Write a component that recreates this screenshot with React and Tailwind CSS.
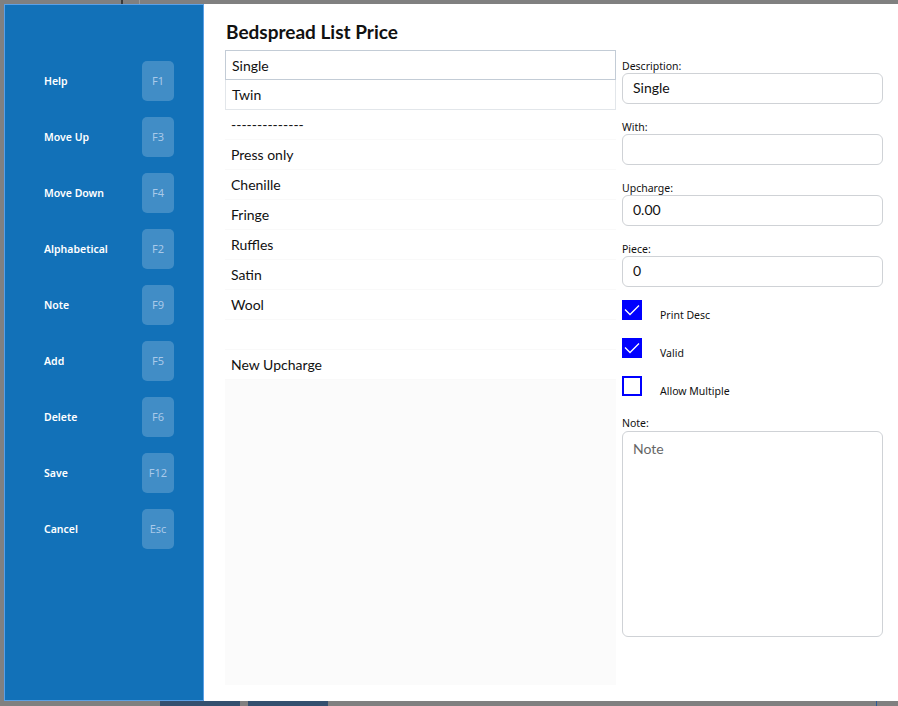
import React from 'react';

const actions = [
  { label: 'Help', key: 'F1' },
  { label: 'Move Up', key: 'F3' },
  { label: 'Move Down', key: 'F4' },
  { label: 'Alphabetical', key: 'F2' },
  { label: 'Note', key: 'F9' },
  { label: 'Add', key: 'F5' },
  { label: 'Delete', key: 'F6' },
  { label: 'Save', key: 'F12' },
  { label: 'Cancel', key: 'Esc' }
];

const items = ['Single', 'Twin', '--------------', 'Press only', 'Chenille', 'Fringe', 'Ruffles', 'Satin', 'Wool', '', 'New Upcharge'];

const fields = [
  { label: 'Description:', value: 'Single' },
  { label: 'With:', value: '' },
  { label: 'Upcharge:', value: '0.00' },
  { label: 'Piece:', value: '0' }
];

const checks = [
  { label: 'Print Desc', checked: true },
  { label: 'Valid', checked: true },
  { label: 'Allow Multiple', checked: false }
];

const Check = ({ checked }) =>
  checked ? (
    <span className="flex h-5 w-5 items-center justify-center bg-[#0000ff]">
      <svg width="18" height="14" viewBox="0 0 18 14" fill="none">
        <polyline points="2,6.5 7,11.5 16,2.5" stroke="white" strokeWidth="1.3" />
      </svg>
    </span>
  ) : (
    <span className="h-5 w-5 border-2 border-[#0000ff] bg-white" />
  );

export default function App() {
  return (
    <div className="relative h-[706px] w-[898px] overflow-hidden bg-[#808080] pl-[4px] pt-[4px] font-['Lato',sans-serif]">
      <div className="absolute left-[121px] top-0 h-[4px] w-[2px] bg-[#3a3a3a]" />
      <div className="absolute left-[139px] top-0 h-[4px] w-px bg-[#9a9a9a]" />
      <div className="absolute bottom-0 left-[160px] h-[5px] w-[80px] bg-[#34506f]" />
      <div className="absolute bottom-0 left-[248px] h-[5px] w-[80px] bg-[#34506f]" />
      <div className="absolute bottom-0 left-[876px] h-[5px] w-px bg-[#2d5b9a]" />

      <div className="flex h-[697px] w-[900px] bg-white">
        <aside className="flex w-[200px] flex-col gap-4 border border-[#5aa0e6] bg-[#1271b8] pl-[39px] pr-[29px] pt-[56px]">
          {actions.map((a) => (
            <div key={a.key} className="flex h-10 items-center justify-between">
              <span className="pt-[2px] font-['Noto_Sans',sans-serif] text-[10.5px] font-semibold text-white">{a.label}</span>
              <span className="flex h-10 w-8 items-center justify-center rounded-[5px] bg-white/20 font-['Noto_Sans',sans-serif] text-[11px] text-[#a9c9e9]">
                {a.key}
              </span>
            </div>
          ))}
        </aside>

        <main className="flex flex-1 flex-col pl-[21px] pt-[14px]">
          <h1 className="h-[28px] pl-px text-[19px] font-bold leading-[28px] text-[#111]">Bedspread List Price</h1>
          <div className="flex gap-[6px] pt-[4px]">
            <div className="flex h-[635px] w-[391px] flex-col bg-[#fbfbfb]">
              {items.map((item, i) => (
                <div
                  key={i}
                  className={`flex h-[30px] items-center px-[6px] text-[14px] text-[#111] ${
                    i === 0
                      ? 'border border-[#c3ccd6] bg-white px-[5px]'
                      : i === 1
                        ? 'border-x border-b border-[#e2e6ea] bg-white px-[5px]'
                        : 'border-b border-[#f9f9f9] bg-white'
                  }`}
                >
                  {item}
                </div>
              ))}
            </div>

            <div className="flex w-[261px] flex-col pt-[9px]">
              {fields.map((f) => (
                <div key={f.label} className="mb-[16px] flex flex-col">
                  <label className="h-[14px] font-['Noto_Sans',sans-serif] text-[10.5px] leading-[14px] text-[#111]">{f.label}</label>
                  <div className="flex h-[31px] items-center rounded-[6px] border border-[#cfd2d6] px-[10px] pb-[2px] text-[14px] text-[#111]">
                    {f.value}
                  </div>
                </div>
              ))}

              <div className="mt-[-3px] flex flex-col gap-[18px]">
                {checks.map((c) => (
                  <div key={c.label} className="flex h-5 items-start">
                    <Check checked={c.checked} />
                    <span className="ml-[18px] mt-[8px] font-['Noto_Sans',sans-serif] text-[10.5px] leading-[14px] text-[#111]">{c.label}</span>
                  </div>
                ))}
              </div>

              <label className="mt-[20px] h-[14px] font-['Noto_Sans',sans-serif] text-[10.5px] leading-[14px] text-[#111]">Note:</label>
              <div className="mt-[1px] h-[206px] rounded-[6px] border border-[#cfd2d6] px-[10px] pt-[6px] text-[14px] text-[#666]">Note</div>
            </div>
          </div>
        </main>
      </div>
    </div>
  );
}
